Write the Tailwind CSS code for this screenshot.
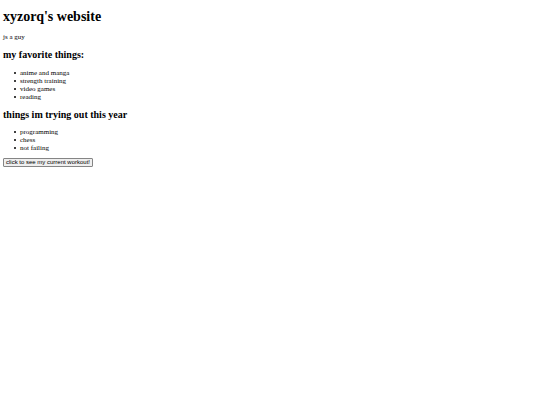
<!DOCTYPE html>
<html lang="en">
<head>
<meta charset="utf-8">
<meta name="viewport" content="width=device-width, initial-scale=1">
<title>xyzorq's website</title>
<script src="https://cdn.jsdelivr.net/npm/@tailwindcss/browser@4"></script>
</head>
<body class="bg-white px-[3px] py-2 font-['Liberation_Serif',serif] text-[7px] leading-[8px] text-black">
<main class="flex flex-col items-start">
<h1 class="text-[14px] leading-[17px] font-bold">xyzorq's website</h1>
<p class="mt-2">js a guy</p>
<h2 class="mt-2 text-[10px] leading-[12px] font-bold">my favorite things:</h2>
<ul class="mt-2 pl-[11px] *:flex *:items-center *:gap-1 *:before:size-[2px] *:before:rounded-full *:before:bg-black *:before:content-['']">
<li>anime and manga</li>
<li>strength training</li>
<li>video games</li>
<li>reading</li>
</ul>
<h2 class="mt-2 text-[10px] leading-[12px] font-bold">things im trying out this year</h2>
<ul class="mt-[7px] pl-[11px] *:flex *:items-center *:gap-1 *:before:size-[2px] *:before:rounded-full *:before:bg-black *:before:content-['']">
<li>programming</li>
<li>chess</li>
<li>not failing</li>
</ul>
<button type="button" class="mt-[6px] rounded-[1px] border border-[#858585] bg-[#efefef] px-[2px] font-['Liberation_Sans',sans-serif] text-[6px] leading-[7px]">click to see my current workout!</button>
</main>
</body>
</html>
